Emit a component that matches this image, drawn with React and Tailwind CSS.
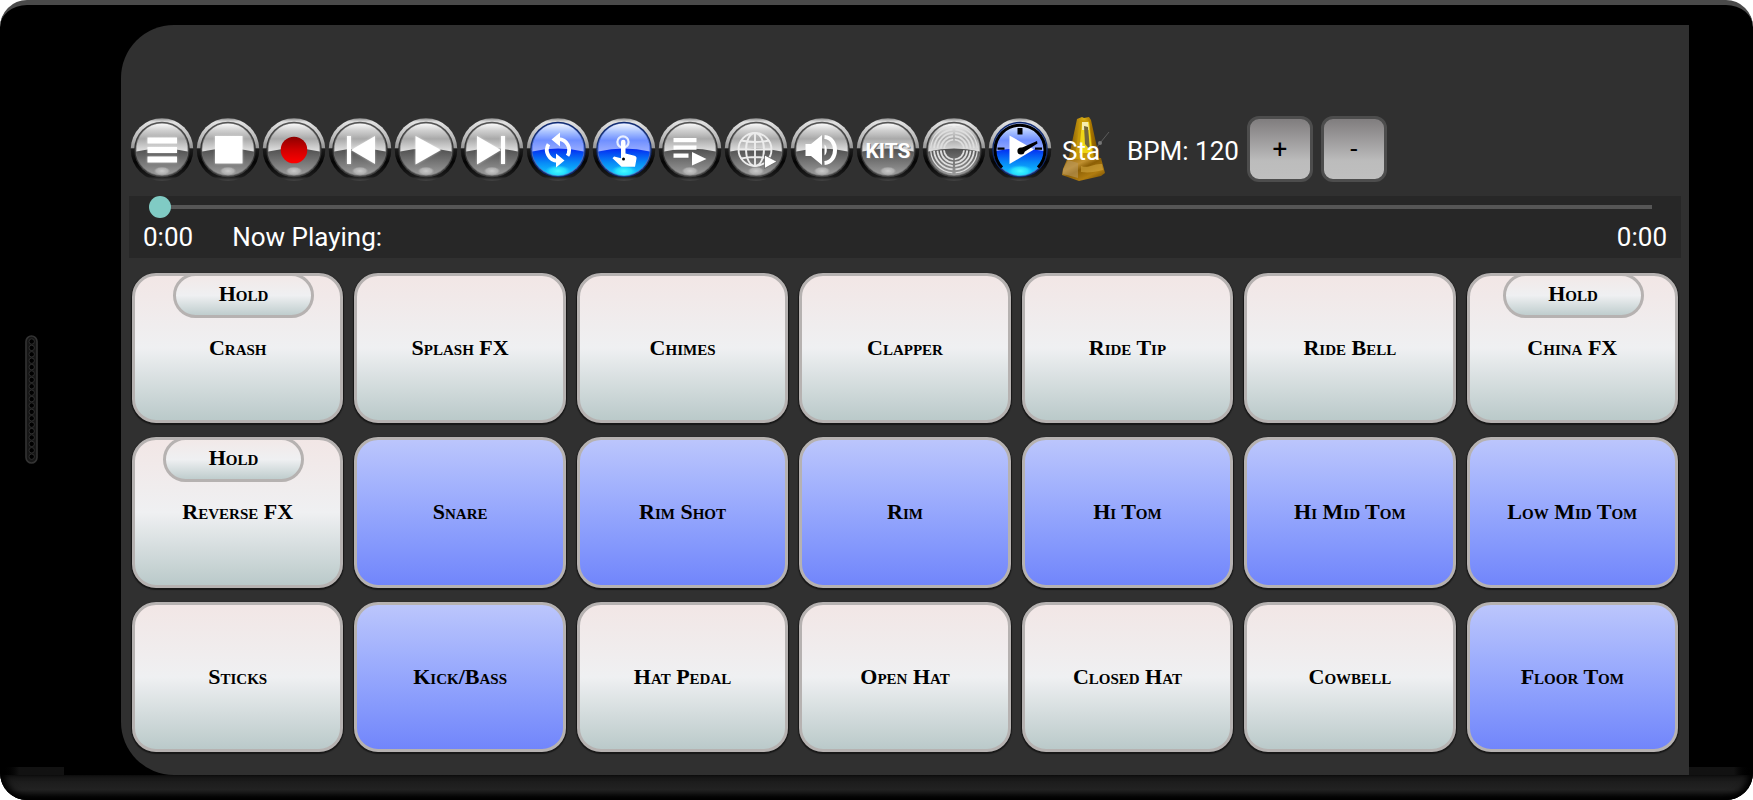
import React from "react";

const PADS = [
  { name: "Crash", hold: "left-[41px]" },
  { name: "Splash FX" },
  { name: "Chimes" },
  { name: "Clapper" },
  { name: "Ride Tip" },
  { name: "Ride Bell" },
  { name: "China FX", hold: "left-[36px]" },
  { name: "Reverse FX", hold: "left-[31px]" },
  { name: "Snare", blue: true },
  { name: "Rim Shot", blue: true },
  { name: "Rim", blue: true },
  { name: "Hi Tom", blue: true },
  { name: "Hi Mid Tom", blue: true },
  { name: "Low Mid Tom", blue: true },
  { name: "Sticks" },
  { name: "Kick/Bass", blue: true },
  { name: "Hat Pedal" },
  { name: "Open Hat" },
  { name: "Closed Hat" },
  { name: "Cowbell" },
  { name: "Floor Tom", blue: true },
];

function Stops({ list }) {
  return list.map(([offset, color, opacity = 1]) => (
    <stop key={offset} offset={offset} stopColor={color} stopOpacity={opacity} />
  ));
}

function Gradients() {
  return (
    <svg className="absolute size-0" aria-hidden="true">
      <defs>
        <linearGradient id="rim" x1="0" y1="0" x2="0" y2="1">
          <Stops list={[[0, "#8a8a8a"], [0.06, "#e2e2e2"], [0.3, "#bcbcbc"], [0.47, "#969696"], [0.49, "#1c1c1c"], [0.7, "#050505"], [0.93, "#1a1a1a"], [1, "#484848"]]} />
        </linearGradient>
        <linearGradient id="groove" x1="0" y1="0" x2="0" y2="1">
          <Stops list={[[0, "#555555"], [0.5, "#2a2a2a"], [1, "#444444"]]} />
        </linearGradient>
        <linearGradient id="grayTop" x1="0" y1="0" x2="0" y2="1">
          <Stops list={[[0, "#fafafa"], [0.25, "#d0d0d0"], [0.55, "#a9a9a9"], [1, "#e2e2e2"]]} />
        </linearGradient>
        <linearGradient id="grayBottom" x1="0" y1="0" x2="0" y2="1">
          <Stops list={[[0, "#3c3c3c"], [0.5, "#525252"], [1, "#9c9c9c"]]} />
        </linearGradient>
        <linearGradient id="blueTop" x1="0" y1="0" x2="0" y2="1">
          <Stops list={[[0, "#f4f7ff"], [0.3, "#a9c2ff"], [0.6, "#6f8fff"], [1, "#9aaeff"]]} />
        </linearGradient>
        <linearGradient id="blueBottom" x1="0" y1="0" x2="0" y2="1">
          <Stops list={[[0, "#0a2ae8"], [0.5, "#0430f2"], [0.75, "#0788f6"], [1, "#12ccff"]]} />
        </linearGradient>
        <radialGradient id="shine">
          <Stops list={[[0, "#cfcfcf", 0.95], [0.7, "#b8b8b8", 0.8], [1, "#a0a0a0", 0]]} />
        </radialGradient>
        <radialGradient id="cyanShine">
          <Stops list={[[0, "#4dffff", 0.95], [0.6, "#2fefff", 0.7], [1, "#22ccff", 0]]} />
        </radialGradient>
        <linearGradient id="red" x1="0" y1="0" x2="0" y2="1">
          <Stops list={[[0, "#8c0000"], [0.5, "#d00000"], [1, "#ff0000"]]} />
        </linearGradient>
        <linearGradient id="gold" x1="0" y1="0" x2="1" y2="0">
          <Stops list={[[0, "#7a5200"], [0.3, "#b98a0c"], [0.5, "#d8ae14"], [0.72, "#a87400"], [1, "#6b4700"]]} />
        </linearGradient>
        <linearGradient id="goldBase" x1="0" y1="0" x2="0.9" y2="1">
          <Stops list={[[0, "#8a5c00"], [0.35, "#c09030"], [0.5, "#8c5f05"], [0.75, "#b07c10"], [1, "#6d4700"]]} />
        </linearGradient>
        <filter id="drop" x="-20%" y="-20%" width="140%" height="140%">
          <feDropShadow dx="0" dy="0" stdDeviation="1" floodColor="#ffffff" floodOpacity="0.5" />
        </filter>
      </defs>
    </svg>
  );
}

function Orb({ label, blue, plain, children }) {
  return (
    <button type="button" aria-label={label} className="size-[62px] shrink-0 rounded-full">
      <svg viewBox="0 0 62 62" className="size-full overflow-visible">
        <circle cx="31" cy="31.5" r="31.3" fill="url(#rim)" />
        <circle cx="31" cy="31.5" r="27.8" fill={blue ? "#102a70" : "url(#groove)"} />
        <circle cx="31" cy="31.5" r="26.6" fill={blue ? "#9ab4ee" : "#a2a2a2"} opacity="0.5" />
        <circle cx="31" cy="31.5" r="25.8" fill={blue ? "url(#blueBottom)" : "url(#grayBottom)"} />
        <path d="M5.3 33.5a25.8 25.8 0 1 1 51.4 0Q31 27.5 5.3 33.5z" fill={blue ? "url(#blueTop)" : "url(#grayTop)"} />
        {!plain && (
          <ellipse cx="31" cy="53" rx={blue ? 13 : 8.5} ry={blue ? 6 : 4.4} fill={blue ? "url(#cyanShine)" : "url(#shine)"} />
        )}
        {children}
      </svg>
    </button>
  );
}

function Metronome() {
  return (
    <button
      type="button"
      className="relative ml-[7px] mr-[18px] flex h-[64px] w-[43px] shrink-0 items-center pt-1"
    >
      <svg viewBox="0 0 43 64" className="absolute inset-0 size-full overflow-visible" aria-hidden="true">
        <path d="M15 2l5-2 2 1 5-1 2 3 9 41H6z" fill="url(#gold)" />
        <path d="M18 3l9 1 5 38H13z" fill="#c89a08" />
        <path d="M20 5h7l3 31H17z" fill="#f0d616" />
        <path d="M20 5h6l1 8h-7z" fill="#f7ecae" />
        <path d="M22 9l4 1 2 23-5-6z" fill="#74683c" />
        <path d="M30 36L47 15" stroke="#5c5c5c" strokeWidth="1" />
        <circle cx="38" cy="26" r="2" fill="#777777" />
        <path d="M6 40l12 3 21-2 4 15-4 3-22 5L0 58l1-6z" fill="url(#goldBase)" />
        <path d="M6 43l10 3v15L1 57v-4z" fill="#b9985c" opacity="0.6" />
        <path d="M19 49c8 3 12-3 21-2l1 6c-8 2-14 3-22 2z" fill="#d2a63f" opacity="0.6" />
      </svg>
      <span className="relative font-['Roboto',sans-serif] text-[26px] leading-8 text-white">Sta</span>
    </button>
  );
}

function arcs(r) {
  return [45, 135, 225, 315].map((a) => {
    const from = ((a - 41) * Math.PI) / 180;
    const to = ((a + 41) * Math.PI) / 180;
    return `M${31 + r * Math.cos(from)} ${31.5 + r * Math.sin(from)}A${r} ${r} 0 0 1 ${31 + r * Math.cos(to)} ${31.5 + r * Math.sin(to)}`;
  }).join("");
}

function Toolbar() {
  return (
    <div className="flex items-center gap-1 pl-[2px]">
      <Orb label="Menu">
        <path d="M16.5 19.5h29.5v6H16.5zM16.5 29h29.5v6H16.5zM16.5 38.5h29.5v6H16.5z" fill="#fff" filter="url(#drop)" />
      </Orb>
      <Orb label="Stop">
        <path d="M18 18h27.500v27.500H18z" fill="#fff" filter="url(#drop)" />
      </Orb>
      <Orb label="Record">
        <circle cx="31" cy="32" r="13.300" fill="url(#red)" />
      </Orb>
      <Orb label="Previous">
        <path d="M18 18h4v28h-4zM46 18v28L22 32z" fill="#fff" filter="url(#drop)" />
      </Orb>
      <Orb label="Play">
        <path d="M20.500 18L46 32 20.500 46.500z" fill="#fff" filter="url(#drop)" />
      </Orb>
      <Orb label="Next">
        <path d="M16 18l24 14-24 14.500zM40 18h4v28h-4z" fill="#fff" filter="url(#drop)" />
      </Orb>
      <Orb label="Loop" blue>
        <g fill="none" stroke="#fff" strokeWidth="3.800">
          <path d="M31.500 21.200a10.900 10.900 0 0 1 9 16.600" />
          <path d="M30.500 42.800a10.900 10.900 0 0 1-9-16.600" />
        </g>
        <path d="M24.500 21.500l8.500-7v14zM37.500 42.500l-8.500-7v14z" fill="#fff" />
      </Orb>
      <Orb label="Touch" blue>
        <circle cx="30" cy="24" r="5.600" fill="none" stroke="#e8efff" strokeWidth="2.200" />
        <path d="M28 24a2 2 0 0 1 4.500 0v11.500l9 2.200c1.700.5 2.300 1.500 2 3l-1.500 8H28.500l-9-8.500 1.600-1.600 6.900 1.600z" fill="#fff" />
        <circle cx="30.500" cy="41" r="1.500" fill="#000" />
      </Orb>
      <Orb label="Playlist">
        <path d="M14.500 20h23v4.200h-23zM14.500 27.500h23v4.200h-23zM14.500 35.500h15v4.200h-15zM33 34l14.500 7L33 47.500z" fill="#fff" />
      </Orb>
      <Orb label="Online songs">
        <g fill="none" stroke="#ececec" strokeWidth="1.900">
          <circle cx="30" cy="31.500" r="16.500" />
          <ellipse cx="30" cy="31.500" rx="9" ry="16.500" />
          <path d="M30 15v33M13.500 31.500h33M16 22.500q14 3 28 0M16 40.500q14-3 28 0" />
        </g>
        <path d="M39.500 37L52 43.500 39.500 50.500z" fill="#fff" stroke="#555" strokeWidth="0.700" />
      </Orb>
      <Orb label="Volume">
        <path d="M14.500 26h5.500L31 17v30l-11-9h-5.500z" fill="#fff" />
        <path d="M33.500 26.500c3 2 3 9 0 11z" fill="#fff" />
        <path d="M33.500 19c14 1 14 25 0 26" fill="none" stroke="#fff" strokeWidth="4" />
      </Orb>
      <Orb label="Kits">
        <text x="32" y="40.500" textAnchor="middle" fill="#777" className="font-['Roboto',sans-serif] text-[21px] font-bold">KITS</text>
        <text x="31" y="39.500" textAnchor="middle" fill="#fff" className="font-['Roboto',sans-serif] text-[21px] font-bold">KITS</text>
      </Orb>
      <Orb label="Pads" plain>
        <g fill="none" stroke="#dedede" strokeWidth="1.800">
          <path d={arcs(10)} />
          <path d={arcs(13.3)} />
          <path d={arcs(16.6)} />
          <path d={arcs(20)} />
          <path d={arcs(23.3)} strokeWidth="1.200" />
        </g>
      </Orb>
      <Orb label="Tempo" blue>
        <path d="M13 49.500A25 25 0 1 1 49 49.500" fill="none" stroke="#000" strokeWidth="3" />
        <path d="M28.500 10h5v6.500h-5zM8.500 29.500h7v2.200h-7zM46 29.500h7v2.200h-7z" fill="#000" />
        <path d="M20.500 17.500L45 31.500 20.500 46z" fill="#fff" />
        <path d="M31 30.500L48 23l.500 2.500-15 9.500z" fill="#000" />
        <circle cx="32" cy="33" r="3.600" fill="#000" />
      </Orb>
      <Metronome />
      <output className="mr-1 whitespace-nowrap pt-[3px] font-['Roboto',sans-serif] text-[26px] leading-8 text-white">
        BPM: 120
      </output>
      <div className="flex gap-2">
        {["+", "-"].map((sign) => (
          <button
            key={sign}
            type="button"
            className="size-[66px] rounded-xl border-[3px] border-[#4d4d4d] bg-linear-to-b from-[#807d7e] via-[#bcbcbc] via-70% to-[#bfbfbf] font-['Roboto',sans-serif] text-[26px] leading-8 text-black"
          >
            {sign}
          </button>
        ))}
      </div>
    </div>
  );
}

function Progress() {
  return (
    <section className="mt-[14px] h-[62px] bg-[#272727] font-['Roboto',sans-serif] text-[26px] leading-8 text-white">
      <div className="pl-5 pr-[29px]">
        <input
          type="range"
          aria-label="Song position"
          min="0"
          max="100"
          defaultValue="0"
          className="block h-[22px] w-full appearance-none bg-transparent [&::-webkit-slider-runnable-track]:h-[4px] [&::-webkit-slider-runnable-track]:bg-linear-to-r [&::-webkit-slider-runnable-track]:from-[#272727] [&::-webkit-slider-runnable-track]:from-[length:11px] [&::-webkit-slider-runnable-track]:via-[#565656] [&::-webkit-slider-runnable-track]:via-[length:11px] [&::-webkit-slider-runnable-track]:to-[#565656] [&::-webkit-slider-thumb]:mt-[-9px] [&::-webkit-slider-thumb]:size-[22px] [&::-webkit-slider-thumb]:appearance-none [&::-webkit-slider-thumb]:rounded-full [&::-webkit-slider-thumb]:bg-[#80cbc4]"
        />
      </div>
      <div className="flex px-[14px] pt-[3px]">
        <span>0:00</span>
        <span className="ml-[39px] flex-1">Now Playing:</span>
        <span>0:00</span>
      </div>
    </section>
  );
}

function Pad({ name, blue, hold }) {
  return (
    <div className="relative">
      <button
        type="button"
        className={
          "size-full rounded-3xl border-[3px] border-[#b6b2b1] bg-origin-border shadow-[0_1px_1px_1px_#181818] " +
          (blue
            ? "bg-linear-to-b from-[#bdc7fc] to-[#7084fb]"
            : "bg-linear-to-b from-[#f2e6e5] via-[#eff0f2] to-[#b8c8c8]")
        }
      >
        {name}
      </button>
      {hold && (
        <button
          type="button"
          aria-label={`Hold ${name}`}
          className={
            "absolute top-0 h-[45px] w-[141px] rounded-full border-[3px] border-[#b6b2b1] bg-linear-to-b from-[#f2e8e7] via-[#eff0f2] to-[#b8c8c8] bg-origin-border pb-1 " +
            hold
          }
        >
          Hold
        </button>
      )}
    </div>
  );
}

export default function App() {
  return (
    <div className="bg-white">
      <Gradients />
      <div className="flex min-h-screen flex-col overflow-hidden rounded-[27px] border-t-[5px] border-[#4a4a4a] bg-black">
        <div className="flex flex-1">
          <div className="flex w-[121px] shrink-0 flex-col">
            <div className="flex flex-1 items-center pl-[25px] pt-[27px]">
              <svg viewBox="0 0 13 129" className="h-[129px] w-[13px]" aria-hidden="true">
                <rect x="1" y="1" width="11" height="127" rx="5.5" fill="#161616" stroke="#333333" strokeWidth="1.6" />
                {Array.from({ length: 19 }, (_, i) => (
                  <circle key={i} cx="6.700" cy={6.5 + i * 6.4} r="2.700" fill="#000" stroke="#333333" strokeWidth="0.900" />
                ))}
              </svg>
            </div>
            <div className="h-2 w-16 bg-linear-to-r from-black to-[#121212] to-30%" />
          </div>
          <main className="mt-5 flex min-w-0 flex-1 flex-col rounded-l-[53px] bg-[#303030] px-2 pb-[23px] pt-[91px]">
            <Toolbar />
            <Progress />
            <div className="mt-[15px] grid flex-1 auto-rows-fr grid-cols-7 gap-x-[11px] gap-y-[14px] px-[3px] font-['Liberation_Serif',serif] text-[22px] font-bold leading-7 text-black [font-variant-caps:small-caps]">
              {PADS.map((pad) => (
                <Pad key={pad.name} {...pad} />
              ))}
            </div>
          </main>
          <div className="flex w-16 shrink-0 flex-col justify-end">
            <div className="h-2 bg-linear-to-l from-black to-[#121212] to-30%" />
          </div>
        </div>
        <div className="h-[25px] shrink-0 rounded-b-[27px] bg-linear-to-b from-[#181818] via-[#222222] via-60% to-[#050505] shadow-[inset_5px_-2px_6px_#000,inset_-5px_-2px_6px_#000]" />
      </div>
    </div>
  );
}
